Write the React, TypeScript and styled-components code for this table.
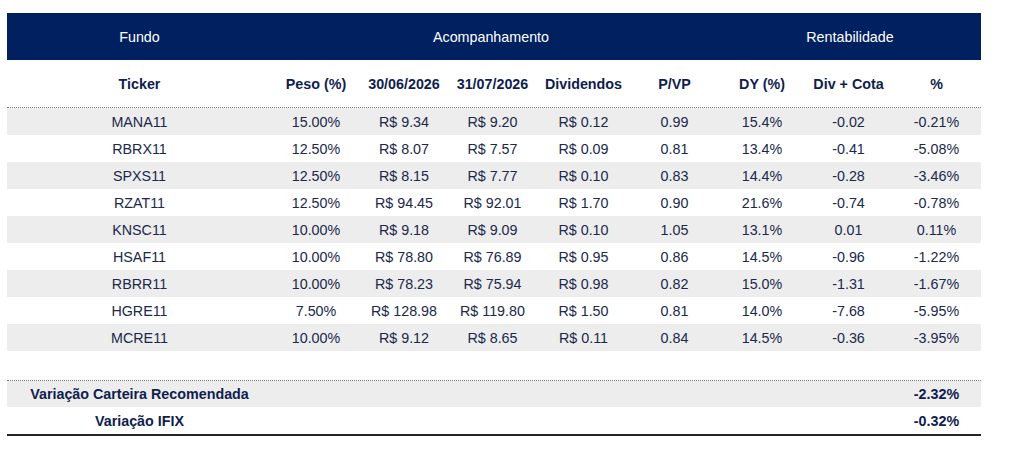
import React from "react";
import styled, { createGlobalStyle } from "styled-components";

const GlobalStyle = createGlobalStyle`
  html, body { margin: 0; padding: 0; background: #ffffff; }
  body { font-family: "Liberation Sans", Arial, sans-serif; }
`;

const COLS = "265px 88px 88px 89px 93px 89px 86px 87px 89px";

const Page = styled.div`
  padding: 13px 0 0 7px;
`;

const Table = styled.div`
  width: 974px;
  display: flex;
  flex-direction: column;
  font-size: 14.3px;
`;

const Row = styled.div`
  display: grid;
  grid-template-columns: ${COLS};
  align-items: center;
`;

const BandRow = styled(Row)`
  height: 47px;
  background: #002060;
  color: #ffffff;
`;

const HeadRow = styled(Row)`
  height: 47px;
  border-bottom: 1px dotted #7a7a7a;
  color: #0f1d4f;
  font-weight: 700;
`;

const DataRow = styled(Row)<{ $shade: boolean }>`
  height: 27px;
  background: ${(p) => (p.$shade ? "#ededed" : "#ffffff")};
  color: #20284a;
`;

const Spacer = styled.div`
  height: 29px;
  border-bottom: 1px dotted #7a7a7a;
`;

const SumRow = styled(Row)<{ $shade: boolean; $last?: boolean }>`
  height: ${(p) => (p.$last ? "27px" : "26px")};
  background: ${(p) => (p.$shade ? "#ededed" : "#ffffff")};
  color: #0f1d4f;
  font-weight: 700;
  border-bottom: ${(p) => (p.$last ? "2px solid #262626" : "none")};
`;

const Cell = styled.div<{ $span?: number; $shift?: number }>`
  grid-column: span ${(p) => p.$span ?? 1};
  text-align: center;
  white-space: nowrap;
  padding-right: ${(p) => (p.$shift ? `${p.$shift}px` : "0")};
`;

type Fund = [string, string, string, string, string, string, string, string, string];

const funds: Fund[] = [
  ["MANA11", "15.00%", "R$ 9.34", "R$ 9.20", "R$ 0.12", "0.99", "15.4%", "-0.02", "-0.21%"],
  ["RBRX11", "12.50%", "R$ 8.07", "R$ 7.57", "R$ 0.09", "0.81", "13.4%", "-0.41", "-5.08%"],
  ["SPXS11", "12.50%", "R$ 8.15", "R$ 7.77", "R$ 0.10", "0.83", "14.4%", "-0.28", "-3.46%"],
  ["RZAT11", "12.50%", "R$ 94.45", "R$ 92.01", "R$ 1.70", "0.90", "21.6%", "-0.74", "-0.78%"],
  ["KNSC11", "10.00%", "R$ 9.18", "R$ 9.09", "R$ 0.10", "1.05", "13.1%", "0.01", "0.11%"],
  ["HSAF11", "10.00%", "R$ 78.80", "R$ 76.89", "R$ 0.95", "0.86", "14.5%", "-0.96", "-1.22%"],
  ["RBRR11", "10.00%", "R$ 78.23", "R$ 75.94", "R$ 0.98", "0.82", "15.0%", "-1.31", "-1.67%"],
  ["HGRE11", "7.50%", "R$ 128.98", "R$ 119.80", "R$ 1.50", "0.81", "14.0%", "-7.68", "-5.95%"],
  ["MCRE11", "10.00%", "R$ 9.12", "R$ 8.65", "R$ 0.11", "0.84", "14.5%", "-0.36", "-3.95%"],
];

const headers = ["Ticker", "Peso (%)", "30/06/2026", "31/07/2026", "Dividendos", "P/VP", "DY (%)", "Div + Cota", "%"];

export default function App() {
  return (
    <Page>
      <GlobalStyle />
      <Table>
        <BandRow>
          <Cell>Fundo</Cell>
          <Cell $span={5} $shift={9}>Acompanhamento</Cell>
          <Cell $span={3}>Rentabilidade</Cell>
        </BandRow>
        <HeadRow>
          {headers.map((h) => (
            <Cell key={h}>{h}</Cell>
          ))}
        </HeadRow>
        {funds.map((f, i) => (
          <DataRow key={f[0]} $shade={i % 2 === 0}>
            {f.map((v, j) => (
              <Cell key={j}>{v}</Cell>
            ))}
          </DataRow>
        ))}
        <Spacer />
        <SumRow $shade>
          <Cell>Variação Carteira Recomendada</Cell>
          <Cell $span={7} />
          <Cell>-2.32%</Cell>
        </SumRow>
        <SumRow $shade={false} $last>
          <Cell>Variação IFIX</Cell>
          <Cell $span={7} />
          <Cell>-0.32%</Cell>
        </SumRow>
      </Table>
    </Page>
  );
}
